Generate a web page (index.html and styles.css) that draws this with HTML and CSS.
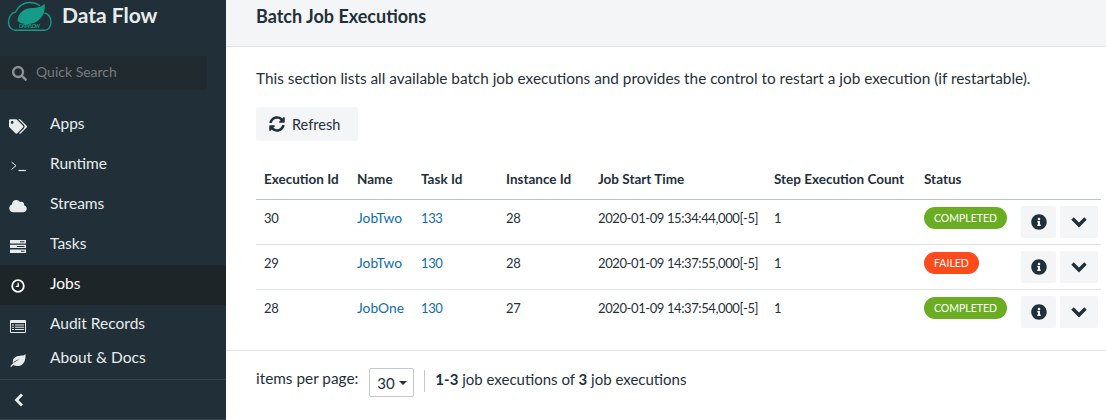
FILE: index.html
```html
<!DOCTYPE html>
<html>
<head>
    <title>Batch Job Executions</title>
    <meta name="viewport" content="width=device-width, initial-scale=1.0">
    <link rel="stylesheet" href="styles.css">
</head>
<body>
    <div class="app">
        <aside class="sidebar">
            <div class="brand">
                <svg class="logo" width="46" height="32" viewBox="0 0 46 32">
                    <path d="M33 5.500C30 3.500 27 2.500 23 2.500C17 2.500 11.500 6 8.500 12C4.500 12.500 1.500 17 1.500 22.500C1.500 26.500 4.500 30.300 9 30.300H37.500C41.500 30.300 44 26.500 44 22C44 17 41 13.300 37.500 13" fill="none" stroke="#159b87" stroke-width="1.400"/>
                    <path d="M10.500 21C11 12 18 8 25 8C30 8 35 7 37.500 3.500C39 12 35 19 28 22.500C21 25 14 24.500 10.500 21Z" fill="#159b87"/>
                    <text class="logo-text" x="12" y="28" textLength="21">DATA FLOW</text>
                </svg>
                <span class="brand-name">Data Flow</span>
            </div>
            <div class="search">
                <svg class="search-icon" width="15" height="15" viewBox="0 0 512 512"><path fill="#8b9194" d="M505 442.700L405.300 343c-4.500-4.500-10.600-7-17-7H372c27.600-35.300 44-79.700 44-128C416 93.100 322.900 0 208 0S0 93.100 0 208s93.100 208 208 208c48.300 0 92.700-16.400 128-44v16.300c0 6.400 2.500 12.500 7 17l99.700 99.700c9.400 9.400 24.600 9.400 33.900 0l28.300-28.300c9.400-9.400 9.400-24.600.1-34zM208 336c-70.700 0-128-57.200-128-128 0-70.700 57.200-128 128-128 70.700 0 128 57.200 128 128 0 70.700-57.200 128-128 128z"/></svg>
                <span class="search-text">Quick Search</span>
            </div>
            <nav class="nav">
                <a class="nav-item">
                    <span class="nav-icon">
                        <svg width="18" height="15" viewBox="0 0 640 512"><path fill="#e8eced" d="M497.900 225.900L286.100 14.100A48 48 0 0 0 252.100 0H48C21.500 0 0 21.500 0 48v204.100a48 48 0 0 0 14.100 33.900l211.900 211.900c18.700 18.700 49.100 18.700 67.900 0l204.100-204.100c18.700-18.700 18.700-49.100-.1-67.900zM112 160c-26.500 0-48-21.500-48-48s21.500-48 48-48 48 21.500 48 48-21.500 48-48 48zm513.900 133.800L421.800 497.900c-18.700 18.700-49.100 18.700-67.900 0l-.4-.4L527.600 323.500c17-17 26.400-39.600 26.400-63.600s-9.400-46.600-26.400-63.600L331.300 0h48.700a48 48 0 0 1 33.900 14.100l211.900 211.900c18.800 18.700 18.800 49.100.1 67.800z"/></svg>
                    </span>
                    Apps
                </a>
                <a class="nav-item">
                    <span class="nav-icon">
                        <svg class="i14" width="15" height="11" viewBox="0 0 15 11"><path d="M.5 1L5 4.700.5 8.500" fill="none" stroke="#e8eced" stroke-width="1"/><path d="M7.500 9.500H15" stroke="#e8eced" stroke-width="1.200"/></svg>
                    </span>
                    Runtime
                </a>
                <a class="nav-item">
                    <span class="nav-icon">
                        <svg width="18" height="14" viewBox="0 0 640 512"><path fill="#e8eced" d="M537.600 226.600c4.100-10.700 6.400-22.400 6.400-34.600 0-53-43-96-96-96-19.700 0-38.100 6-53.300 16.200C367 64.200 315.300 32 256 32c-88.400 0-160 71.600-160 160 0 2.700.1 5.400.2 8.100C40.200 219.800 0 273.200 0 336c0 79.500 64.500 144 144 144h368c70.700 0 128-57.300 128-128 0-61.900-44-113.600-102.400-125.400z"/></svg>
                    </span>
                    Streams
                </a>
                <a class="nav-item">
                    <span class="nav-icon">
                        <svg class="i16" width="16" height="13" viewBox="0 0 16 13"><path fill="#e8eced" d="M0 0h16v3.400H0zM0 4.700h16v3.400H0zM0 9.500h16v3.500H0z"/><path fill="#213038" d="M10 1.200h4.500v1H10zM7 6h7.500v1H7zM11 10.800h3.500v1H11z"/></svg>
                    </span>
                    Tasks
                </a>
                <a class="nav-item active">
                    <span class="nav-icon">
                        <svg class="i14" width="14" height="14" viewBox="0 0 14 14"><circle cx="7" cy="7" r="5.800" fill="none" stroke="#fff" stroke-width="1.800"/><path d="M7.200 3.800v3.500H4.800" fill="none" stroke="#fff" stroke-width="1.300"/></svg>
                    </span>
                    Jobs
                </a>
                <a class="nav-item">
                    <span class="nav-icon">
                        <svg class="i16" width="16" height="13" viewBox="0 0 16 13"><path fill="#e8eced" fill-rule="evenodd" d="M1 0h14a1 1 0 0 1 1 1v11a1 1 0 0 1-1 1H1a1 1 0 0 1-1-1V1a1 1 0 0 1 1-1zM1 3v9h14V3z"/><path fill="#e8eced" d="M2 4.500h2v1H2zM5 4.500h9v1H5zM2 6.700h2v1H2zM5 6.700h9v1H5zM2 9h2v1H2zM5 9h9v1H5z"/></svg>
                    </span>
                    Audit Records
                </a>
                <a class="nav-item about">
                    <span class="nav-icon">
                        <svg class="i16" width="16" height="13" viewBox="0 0 16 13"><path fill="#e8eced" d="M15.500 0C15 .9 14 1.500 12 1.600 7 1.800 3.300 3.300 2.800 7.200c-.1.700 0 1.300.2 1.900C4.500 7 7 5.800 10 5.300 7 6.300 3.700 8.300.3 12.300l.9.700 2.100-2C5 12 7 12.300 9 12c4.500-.7 7-5.500 6.500-12z"/></svg>
                    </span>
                    About &amp; Docs
                </a>
            </nav>
            <div class="collapse">
                <svg width="11" height="14" viewBox="0 0 11 14"><path d="M9 1.500L3.500 7 9 12.500" fill="none" stroke="#e8eced" stroke-width="2.800"/></svg>
            </div>
        </aside>

        <main class="main">
            <header class="page-header">
                <h1>Batch Job Executions</h1>
            </header>
            <section class="content">
                <p class="intro">This section lists all available batch job executions and provides the control to restart a job execution (if restartable).</p>
                <button class="btn-refresh">
                    <svg width="16" height="16" viewBox="0 0 512 512"><path fill="#1f303a" d="M370.720 133.280C339.458 104.008 298.888 87.962 255.848 88c-77.458.068-144.328 53.178-162.791 126.850-1.344 5.363-6.122 9.150-11.651 9.150H24.103c-7.498 0-13.194-6.807-11.807-14.176C33.933 94.924 134.813 8 256 8c66.448 0 126.791 26.136 171.315 68.685L463.030 40.970C478.149 25.851 504 36.559 504 57.941V192c0 13.255-10.745 24-24 24H345.941c-21.382 0-32.090-25.851-16.971-40.971l41.750-41.749zM32 296h134.059c21.382 0 32.090 25.851 16.971 40.971l-41.750 41.750c31.262 29.273 71.835 45.319 114.876 45.280 77.418-.070 144.315-53.144 162.787-126.849 1.344-5.363 6.122-9.150 11.651-9.150h57.304c7.498 0 13.194 6.807 11.807 14.176C478.067 417.076 377.187 504 256 504c-66.448 0-126.791-26.136-171.315-68.685L48.970 471.030C33.851 486.149 8 475.441 8 454.059V320c0-13.255 10.745-24 24-24z"/></svg>
                    Refresh
                </button>
                <table class="jobs">
                    <thead>
                        <tr>
                            <th class="c-id">Execution Id</th>
                            <th class="c-name">Name</th>
                            <th class="c-task">Task Id</th>
                            <th class="c-inst">Instance Id</th>
                            <th class="c-time">Job Start Time</th>
                            <th class="c-step">Step Execution Count</th>
                            <th class="c-status">Status</th>
                            <th></th>
                        </tr>
                    </thead>
                    <tbody>
                        <tr>
                            <td class="num">30</td>
                            <td class="name"><a>JobTwo</a></td>
                            <td class="num"><a>133</a></td>
                            <td class="num">28</td>
                            <td class="num">2020-01-09 15:34:44,000[-5]</td>
                            <td class="num">1</td>
                            <td class="status"><span class="pill ok">COMPLETED</span></td>
                            <td class="actions">
                                <div class="action-group">
                                    <span class="icon-btn"><svg width="16" height="16" viewBox="0 0 512 512"><path fill="#1f303a" d="M256 8C119.043 8 8 119.083 8 256c0 136.997 111.043 248 248 248s248-111.003 248-248C504 119.083 392.957 8 256 8zm0 110c23.196 0 42 18.804 42 42s-18.804 42-42 42-42-18.804-42-42 18.804-42 42-42zm56 254c0 6.627-5.373 12-12 12h-88c-6.627 0-12-5.373-12-12v-24c0-6.627 5.373-12 12-12h12v-64h-12c-6.627 0-12-5.373-12-12v-24c0-6.627 5.373-12 12-12h64c6.627 0 12 5.373 12 12v100h12c6.627 0 12 5.373 12 12v24z"/></svg></span>
                                    <span class="icon-btn wide"><svg width="18" height="12" viewBox="0 0 18 12"><path d="M2.500 2.500L9 9l6.500-6.500" fill="none" stroke="#1f303a" stroke-width="3.400"/></svg></span>
                                </div>
                            </td>
                        </tr>
                        <tr>
                            <td class="num">29</td>
                            <td class="name"><a>JobTwo</a></td>
                            <td class="num"><a>130</a></td>
                            <td class="num">28</td>
                            <td class="num">2020-01-09 14:37:55,000[-5]</td>
                            <td class="num">1</td>
                            <td class="status"><span class="pill bad">FAILED</span></td>
                            <td class="actions">
                                <div class="action-group">
                                    <span class="icon-btn"><svg width="16" height="16" viewBox="0 0 512 512"><path fill="#1f303a" d="M256 8C119.043 8 8 119.083 8 256c0 136.997 111.043 248 248 248s248-111.003 248-248C504 119.083 392.957 8 256 8zm0 110c23.196 0 42 18.804 42 42s-18.804 42-42 42-42-18.804-42-42 18.804-42 42-42zm56 254c0 6.627-5.373 12-12 12h-88c-6.627 0-12-5.373-12-12v-24c0-6.627 5.373-12 12-12h12v-64h-12c-6.627 0-12-5.373-12-12v-24c0-6.627 5.373-12 12-12h64c6.627 0 12 5.373 12 12v100h12c6.627 0 12 5.373 12 12v24z"/></svg></span>
                                    <span class="icon-btn wide"><svg width="18" height="12" viewBox="0 0 18 12"><path d="M2.500 2.500L9 9l6.500-6.500" fill="none" stroke="#1f303a" stroke-width="3.400"/></svg></span>
                                </div>
                            </td>
                        </tr>
                        <tr>
                            <td class="num">28</td>
                            <td class="name"><a>JobOne</a></td>
                            <td class="num"><a>130</a></td>
                            <td class="num">27</td>
                            <td class="num">2020-01-09 14:37:54,000[-5]</td>
                            <td class="num">1</td>
                            <td class="status"><span class="pill ok">COMPLETED</span></td>
                            <td class="actions">
                                <div class="action-group">
                                    <span class="icon-btn"><svg width="16" height="16" viewBox="0 0 512 512"><path fill="#1f303a" d="M256 8C119.043 8 8 119.083 8 256c0 136.997 111.043 248 248 248s248-111.003 248-248C504 119.083 392.957 8 256 8zm0 110c23.196 0 42 18.804 42 42s-18.804 42-42 42-42-18.804-42-42 18.804-42 42-42zm56 254c0 6.627-5.373 12-12 12h-88c-6.627 0-12-5.373-12-12v-24c0-6.627 5.373-12 12-12h12v-64h-12c-6.627 0-12-5.373-12-12v-24c0-6.627 5.373-12 12-12h64c6.627 0 12 5.373 12 12v100h12c6.627 0 12 5.373 12 12v24z"/></svg></span>
                                    <span class="icon-btn wide"><svg width="18" height="12" viewBox="0 0 18 12"><path d="M2.500 2.500L9 9l6.500-6.500" fill="none" stroke="#1f303a" stroke-width="3.400"/></svg></span>
                                </div>
                            </td>
                        </tr>
                    </tbody>
                </table>
                <div class="pager">
                    <span class="pager-label">items per page:</span>
                    <span class="select">30 <i class="caret"></i></span>
                    <span class="pager-text"><b>1-3</b> job executions of <b>3</b> job executions</span>
                </div>
            </section>
        </main>
    </div>
</body>
</html>
```

FILE: styles.css
```css
* { box-sizing: border-box; }
html, body { margin: 0; height: 420px; overflow: hidden; }
body { font-family: Lato, "Noto Sans", sans-serif; font-size: 14px; color: #1f303a; background: #fff; }
.app { display: flex; height: 420px; }

.sidebar { width: 226px; flex: none; background: #213038; color: #e8eced; display: flex; flex-direction: column; }
.brand { display: flex; align-items: center; height: 32px; padding-left: 7px; }
.logo { flex: none; }
.logo-text { font-size: 5px; font-weight: 700; fill: #159b87; }
.brand-name { font-size: 21px; font-weight: 700; color: #e8eced; margin-left: 9px; padding-bottom: 3px; }
.search { height: 34px; width: 207px; margin-top: 24px; background: #212a2e; border-radius: 3px; display: flex; align-items: center; padding-left: 12px; }
.search-text { margin-left: 9px; padding-bottom: 3px; color: #757c80; font-size: 14px; }
.nav { margin-top: 15px; display: flex; flex-direction: column; }
.nav-item { display: flex; align-items: center; height: 40px; padding-bottom: 5px; font-size: 15.5px; color: #e8eced; }
.nav-item.active { background: #1e2528; color: #fff; }
.nav-item.about { height: 28px; }
.nav-icon { width: 50px; flex: none; display: flex; justify-content: flex-start; padding: 7px 0 0 9px; }
.i16 { margin-left: 1px; }
.i14 { margin-left: 2px; }
.collapse { border-top: 1px solid #36454d; border-bottom: 1px solid #36454d; margin-top: 6px; height: 41px; display: flex; align-items: center; padding-left: 13px; }

.main { flex: 1; min-width: 0; }
.page-header { height: 47px; background: #f3f5f7; border-bottom: 1px solid #e0e5e8; padding-left: 30px; }
.page-header h1 { margin: 0; font-size: 18px; font-weight: 700; line-height: 32px; color: #1f303a; }
.intro { margin: 21px 0 0 30px; font-size: 15.35px; line-height: 20px; }
.btn-refresh { display: flex; align-items: center; gap: 7px; margin: 19px 0 0 30px; height: 34px; width: 102px; padding: 0 0 0 13px; border: 0; border-radius: 2px; background: #f3f5f7; font: inherit; font-size: 14.500px; color: #1f303a; }

.jobs { border-collapse: separate; border-spacing: 0; width: 845px; margin: 16px 0 0 30px; table-layout: fixed; }
.jobs th { height: 43px; text-align: left; font-size: 13.5px; font-weight: 700; padding: 1px 0 0 8px; border-bottom: 1px solid #b9c5ce; white-space: nowrap; }
.jobs td { height: 45px; font-size: 13.5px; line-height: 20px; vertical-align: top; padding: 8px 0 0 8px; border-bottom: 1px solid #dfe4e6; white-space: nowrap; }
.jobs tbody tr:last-child td { border-bottom: 0; }
.jobs a { color: #0f6cac; }
.jobs td.num { font-size: 13px; letter-spacing: -.4px; }
.jobs td.name { font-size: 13.8px; }
.c-id { width: 93px; }
.c-name { width: 64px; }
.c-task { width: 85px; }
.c-inst { width: 92px; }
.c-time { width: 176px; }
.c-step { width: 150px; }
.c-status { width: 97px; }
.jobs td.status { padding-top: 7px; }
.pill { display: inline-block; height: 22px; line-height: 22px; border-radius: 11px; padding: 0 10px; font-size: 10.500px; color: #fff; vertical-align: top; }
.pill.ok { background: #6aad23; }
.pill.bad { background: #ff4a1c; }
.jobs td.actions { padding: 6px 0 0 8px; }
.action-group { display: flex; gap: 4px; }
.icon-btn { display: flex; width: 35px; height: 32px; align-items: center; justify-content: center; background: #f3f5f7; border-radius: 2px; }
.icon-btn.wide { width: 38px; }

.pager { border-top: 1px solid #e0e6e6; height: 70px; display: flex; align-items: flex-start; padding: 17px 0 0 30px; font-size: 15px; margin-top: 15px; }
.pager-label { font-size: 15.35px; line-height: 20px; }
.select { width: 45px; height: 29px; border: 1px solid #c4c8ca; border-radius: 2px; margin-left: 11px; display: flex; align-items: center; padding-left: 7px; gap: 4px; }
.caret { width: 0; height: 0; border: 4px solid transparent; border-top-color: #1f303a; border-bottom: 0; }
.pager-text { margin: 2px 0 0 10px; padding: 0 0 4px 10px; border-left: 1px solid #c4c8ca; line-height: 18px; }
```
